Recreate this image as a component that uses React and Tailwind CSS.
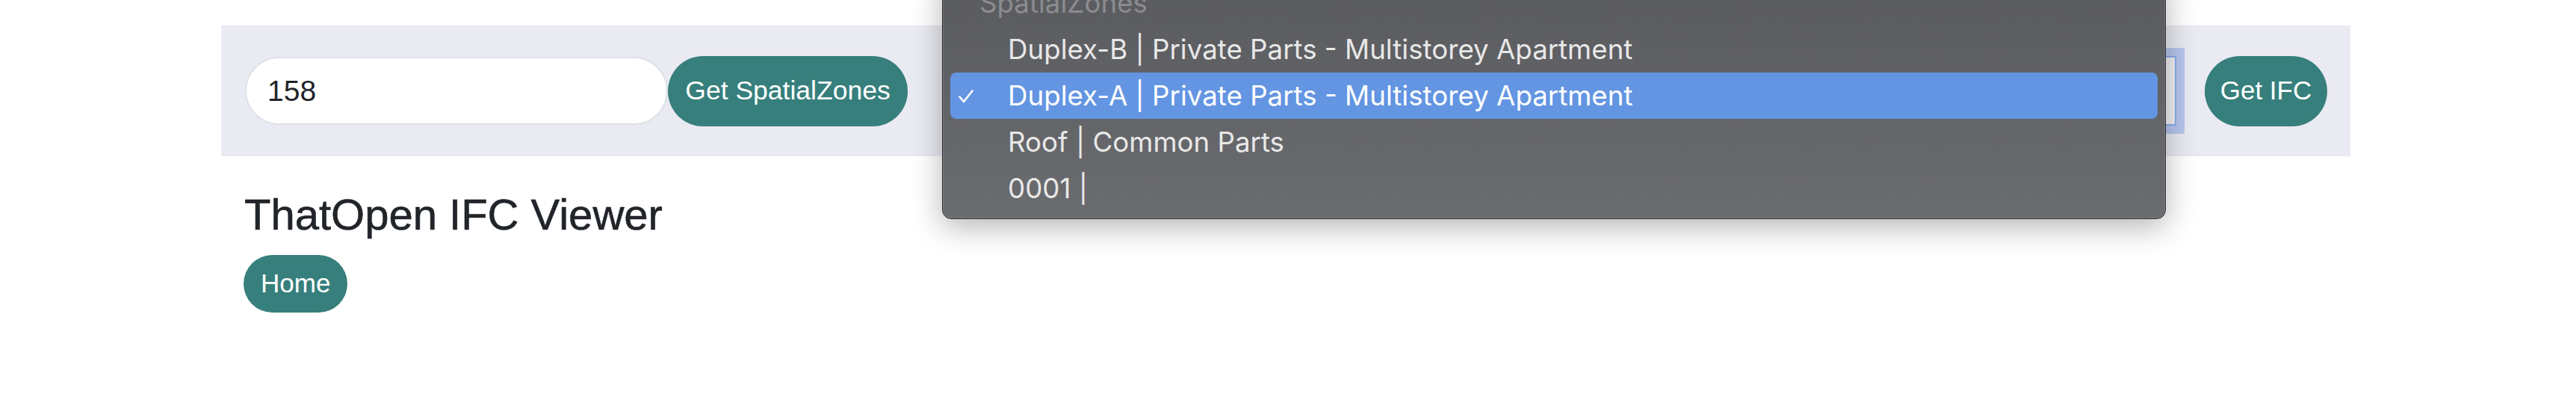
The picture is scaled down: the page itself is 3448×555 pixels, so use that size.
export default function App() {
    const options = [
        "Duplex-B | Private Parts - Multistorey Apartment",
        "Duplex-A | Private Parts - Multistorey Apartment",
        "Roof | Common Parts",
        "0001 |",
    ];

    return (
        <div className="relative min-h-[555px] overflow-hidden bg-white font-['Liberation_Sans',Arial,sans-serif] text-[#212529]">
            <div className="ml-[296px] w-[2850px] pt-[34px]">

                {/* toolbar */}
                <div className="flex h-[175px] items-center bg-[#eaeaf2] pl-[32px] pr-[31px]">
                    <input
                        readOnly
                        value="158"
                        className="h-[91px] w-[566px] rounded-full border-2 border-[#dee2e6] bg-white pl-[28px] text-[39px] text-[#212529] outline-none"
                    />
                    <button className="h-[94px] w-[321px] shrink-0 rounded-full bg-[#377f7c] text-[35.5px] text-white">
                        Get SpatialZones
                    </button>

                    {/* select (focused, covered by its popup) */}
                    <div className="ml-[90px] h-[93px] flex-1 border-2 border-[#89afec] bg-[#f1f1f4] shadow-[0_0_0_11px_#b7c6ee]"></div>

                    <button className="ml-[38px] h-[94px] w-[164px] shrink-0 rounded-full bg-[#377f7c] text-[35px] text-white">
                        Get IFC
                    </button>
                </div>

                <h1 className="mt-[43px] pl-[31px] text-[58px] font-normal leading-[1.2] text-[#212529] [-webkit-text-stroke:0.6px_#212529]">
                    ThatOpen IFC Viewer
                </h1>
                <button className="ml-[30px] mt-[19px] h-[77px] rounded-full bg-[#377f7c] px-[23px] text-[35px] text-white">
                    Home
                </button>
            </div>

            {/* native select popup */}
            <div className="absolute left-[1261px] top-[-34px] h-[327px] w-[1638px] rounded-[12px] border border-[#2e2e30] bg-gradient-to-b from-[#595a5e] to-[#6a6c6f] px-[10px] pt-[6px] font-['Inter',sans-serif] shadow-[0_10px_40px_rgba(0,0,0,0.3),inset_0_0_0_1px_rgba(255,255,255,0.12)]">
                <div className="flex h-[62px] items-center pl-[39px] text-[36.7px] text-[#8b8c90]">
                    SpatialZones
                </div>
                {options.map((o, i) => (
                    <div
                        key={o}
                        className={
                            i === 1
                                ? "relative flex h-[62px] items-center rounded-[8px] bg-[#6395e2] pl-[77px] text-[36.7px] text-white"
                                : "relative flex h-[62px] items-center pl-[77px] text-[36.7px] text-[#e8e8e8]"
                        }
                    >
                        {i === 1 && (
                            <svg className="absolute left-[11px] top-[23px]" width="20" height="18" viewBox="0 0 20 18" fill="none">
                                <path d="M1.5 9.5 L7 16 L18.5 1.5" stroke="white" strokeWidth="2.6" strokeLinecap="round" strokeLinejoin="round" />
                            </svg>
                        )}
                        {o}
                    </div>
                ))}
            </div>
        </div>
    );
}
